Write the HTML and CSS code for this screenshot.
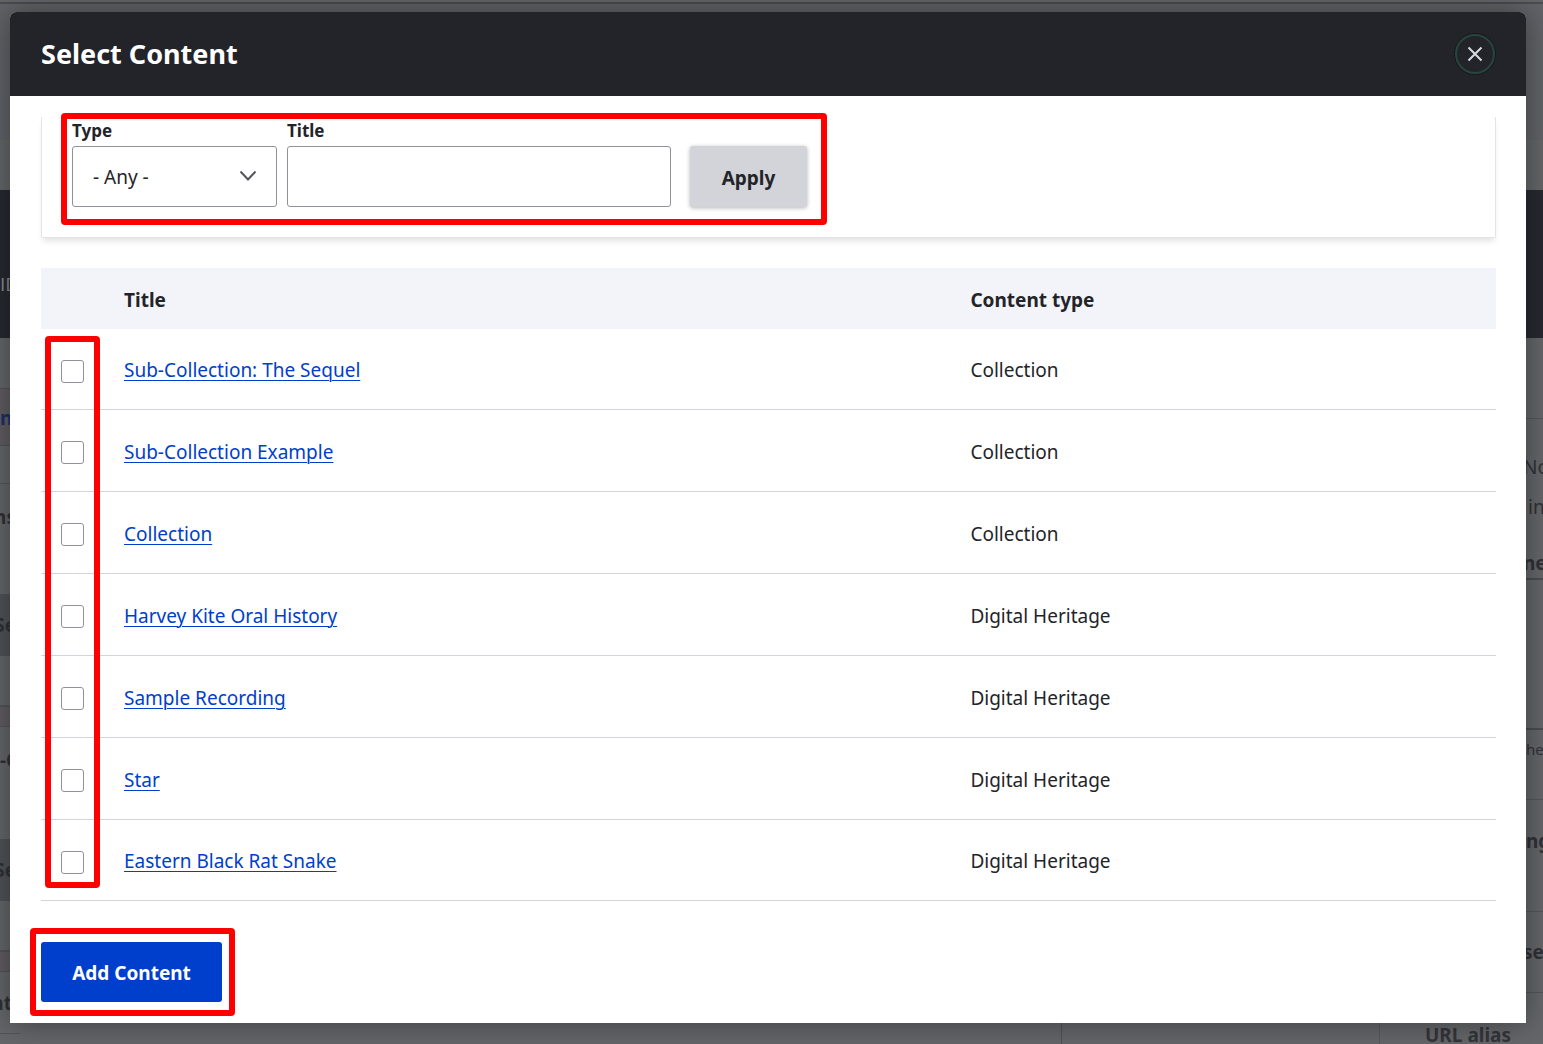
FILE: index.html
```html
<!DOCTYPE html>
<html lang="en">
<head>
<meta charset="utf-8">
<title>Select Content</title>
<meta name="viewport" content="width=device-width, initial-scale=1">
<link rel="stylesheet" href="styles.css">
</head>
<body>
<div class="underlay" aria-hidden="true">
  <div class="toolbar-edge"></div>
  <div class="page-head"></div>
  <div class="crumbs"></div>
  <div class="banner"><span>ID</span></div>
  <div class="page-columns">
    <div class="side">
      <div class="cell h50"></div>
      <div class="cell h58 tinted tab">n</div>
      <div class="cell h38"></div>
      <div class="cell h110 top strong clip">ns</div>
      <div class="cell h62 shade strong clip">Se</div>
      <div class="cell h50 line"></div>
      <div class="cell h20 tinted"></div>
      <div class="cell h112 top strong">-C</div>
      <div class="cell h62 shade strong clip">Se</div>
      <div class="cell h50 line"></div>
      <div class="cell h20 tinted"></div>
      <div class="cell h62 strong at line">at</div>
    </div>
    <div class="middle">
      <div class="card-end"></div>
      <div class="gutter"></div>
      <div class="meta"></div>
    </div>
    <div class="alias">URL alias</div>
    <div class="rail">
      <div class="cell h80 line"></div>
      <div class="cell status">No</div>
      <div class="cell admin">in</div>
      <div class="cell menu strong thick">ne</div>
      <div class="cell h150 thick"></div>
      <div class="cell h70 top small line">he</div>
      <div class="cell h112 setting strong line">ng</div>
      <div class="cell h80 strong line">se</div>
    </div>
  </div>
</div>

<main class="dialog" role="dialog" aria-labelledby="dialog-title">
  <header class="dialog-head">
    <h1 id="dialog-title">Select Content</h1>
    <button class="close" type="button" aria-label="Close">
      <svg width="16" height="16" viewBox="0 0 16 16" fill="none" stroke="currentColor" stroke-width="2"><path d="M1.500 1.500l13 13M14.500 1.500l-13 13"/></svg>
    </button>
  </header>
  <div class="dialog-body">
    <form class="filters">
      <div class="field type">
        <label for="type">Type</label>
        <select id="type"><option>- Any -</option></select>
        <svg class="chevron" width="18" height="12" viewBox="0 0 18 12" fill="none" stroke="currentColor" stroke-width="2"><path d="M1.500 1.500L9 9.500l7.500-8"/></svg>
      </div>
      <div class="field title">
        <label for="title">Title</label>
        <input id="title" type="text">
      </div>
      <button class="button apply" type="button">Apply</button>
      <div class="mark mark-filters"></div>
    </form>

    <div class="listing">
      <table>
        <thead>
          <tr><th class="pick"></th><th>Title</th><th class="kind">Content type</th></tr>
        </thead>
        <tbody>
          <tr><td><input type="checkbox" aria-label="Select Sub-Collection: The Sequel"></td><td><a href="#">Sub-Collection: The Sequel</a></td><td>Collection</td></tr>
          <tr><td><input type="checkbox" aria-label="Select Sub-Collection Example"></td><td><a href="#">Sub-Collection Example</a></td><td>Collection</td></tr>
          <tr><td><input type="checkbox" aria-label="Select Collection"></td><td><a href="#">Collection</a></td><td>Collection</td></tr>
          <tr><td><input type="checkbox" aria-label="Select Harvey Kite Oral History"></td><td><a href="#">Harvey Kite Oral History</a></td><td>Digital Heritage</td></tr>
          <tr><td><input type="checkbox" aria-label="Select Sample Recording"></td><td><a href="#">Sample Recording</a></td><td>Digital Heritage</td></tr>
          <tr><td><input type="checkbox" aria-label="Select Star"></td><td><a href="#">Star</a></td><td>Digital Heritage</td></tr>
          <tr><td><input type="checkbox" aria-label="Select Eastern Black Rat Snake"></td><td><a href="#">Eastern Black Rat Snake</a></td><td>Digital Heritage</td></tr>
        </tbody>
      </table>
      <div class="mark mark-picks"></div>
    </div>

    <div class="actions">
      <button class="button primary" type="button">Add Content</button>
      <div class="mark mark-add"></div>
    </div>
  </div>
</main>
</body>
</html>
```
FILE: styles.css
```css
* { box-sizing: border-box; }

body {
  margin: 0;
  position: relative;
  display: flow-root;
  min-height: 100vh;
  background: #656669;
  color: #232429;
  font: 19px/30px "Noto Sans", "Open Sans", sans-serif;
}

/* Dimmed page behind the dialog */
.underlay {
  position: absolute;
  inset: 0;
  overflow: hidden;
  display: flex;
  flex-direction: column;
  color: #303136;
}
.toolbar-edge { height: 4px; flex: none; border-bottom: 2px solid #4b4c4f; }
.page-head { height: 136px; flex: none; background: #626368; }
.crumbs { height: 50px; flex: none; background: #656668; }
.banner {
  height: 148px;
  flex: none;
  background: #282930;
  color: #8b8c90;
  padding-top: 79px;
  font-family: "Open Sans", sans-serif;
}
.page-columns { flex: 1; display: flex; min-height: 0; }
.side, .rail { width: 20px; flex: none; }
.cell { display: flex; align-items: center; white-space: nowrap; }
.top { align-items: flex-start; padding-top: 18px; }
.line { border-bottom: 1px solid #55565a; }
.thick { border-bottom: 2px solid #4b4c50; }
.tinted { background: #605d61; border-top: 1px solid #535357; border-bottom: 1px solid #535357; }
.shade { background: #515257; }
.strong { font-weight: 700; }
.tab { color: #1c2f6b; font-weight: 700; padding-top: 2px; }
.clip { justify-content: flex-end; padding-right: 4px; }
.at { justify-content: flex-end; padding-right: 8px; }
.h20 { height: 21px; }
.h38 { height: 38px; border-bottom: 1px solid #55565a; }
.h50 { height: 50px; }
.h58 { height: 58px; }
.h62 { height: 62px; }
.h70 { height: 70px; }
.h80 { height: 81px; }
.h110 { height: 110px; }
.h112 { height: 112px; }
.h150 { height: 150px; }
.small { font-size: 15px; padding: 4px 0 0 3px; }
.status { height: 73px; padding-top: 22px; }
.admin { height: 30px; padding-left: 5px; }
.menu { height: 58px; padding-top: 26px; }
.setting { align-items: flex-start; padding: 26px 0 0 3px; }
.middle { flex: 1; display: flex; }
.card-end { flex: 1; }
.gutter { width: 66px; border-right: 1px solid #505155; }
.meta { width: 318px; border-right: 1px solid #58595d; }
.alias { width: 143px; align-self: flex-end; padding-left: 45px; font-weight: 700; line-height: 18px; color: #343539; white-space: nowrap; }

/* Dialog */
.dialog {
  position: relative;
  margin: 12px 17px 21px 10px;
  border-radius: 6px 6px 0 0;
  background: #fff;
  box-shadow: 0 0 30px rgba(0, 0, 0, .4);
}
.dialog-head {
  height: 84px;
  padding: 0 31px;
  display: flex;
  align-items: center;
  justify-content: space-between;
  border-radius: 6px 6px 0 0;
  background: #232429;
  color: #fff;
}
h1 { margin: 0; font-size: 27px; line-height: 36px; font-weight: 700; }
.close {
  width: 40px;
  height: 40px;
  padding: 0;
  display: grid;
  place-items: center;
  border: 2px solid #26473d;
  outline: 1px dotted #0c0d0f;
  outline-offset: 0;
  border-radius: 50%;
  background: transparent;
  color: #d9dae0;
}
.dialog-body { padding: 21px 30px 21px 31px; }

.filters {
  position: relative;
  display: flex;
  align-items: flex-end;
  height: 121px;
  padding: 0 30px 30px;
  border: 1px solid #e4e4e7;
  border-top: 0;
  border-radius: 0 0 2px 2px;
  box-shadow: 0 5px 6px -2px rgba(0, 0, 0, .12);
}
.field { position: relative; display: flex; flex-direction: column; margin-right: 10px; }
.field label { font-size: 17px; font-weight: 700; line-height: 24px; margin-bottom: 3px; }
.field select, .field input {
  width: 100%;
  height: 61px;
  margin: 0;
  padding: 0 20px;
  border: 1px solid #919297;
  border-radius: 3px;
  background: #fff;
  color: #232429;
  font: inherit;
  appearance: none;
}
.type { width: 205px; }
.title { width: 384px; margin-right: 19px; }
.chevron { position: absolute; right: 20px; bottom: 25px; color: #55565b; pointer-events: none; }

.button {
  height: 60px;
  padding: 2px 0 0;
  border: 0;
  border-radius: 3px;
  font: inherit;
  font-weight: 700;
}
.apply { width: 117px; height: 61px; background: #d3d4d9; color: #232429; box-shadow: 0 1px 4px rgba(0, 0, 0, .3); }
.primary { width: 181px; background: #003ecc; color: #fff; display: block; }

.listing { position: relative; margin-top: 30px; }
table { width: 100%; border-collapse: separate; border-spacing: 0; table-layout: fixed; }
th, td { padding: 2px 20px 0; text-align: left; vertical-align: middle; }
th { height: 61px; background: #f3f4f9; font-weight: 700; }
td { height: 82px; border-bottom: 1px solid #d3d4d9; }
tr:first-child td, tr:last-child td { height: 81px; }
.pick { width: 63px; }
.kind { width: 37.5%; }
td a { color: #003ecc; text-decoration: underline; text-decoration-thickness: 1px; text-underline-offset: 3px; }
td input {
  display: block;
  width: 23px;
  height: 23px;
  margin: 2px 0 0;
  border: 1px solid #919297;
  border-radius: 3px;
  background: #fff;
  appearance: none;
}

.actions { position: relative; margin-top: 41px; }

/* Red highlight frames */
.mark { position: absolute; border: 6px solid #f00; border-radius: 4px; pointer-events: none; }
.mark-filters { left: 19px; top: -4px; width: 766px; height: 112px; }
.mark-picks { left: 4px; top: 68px; width: 55px; bottom: 13px; }
.mark-add { left: -11px; top: -14px; width: 205px; height: 88px; }
```
